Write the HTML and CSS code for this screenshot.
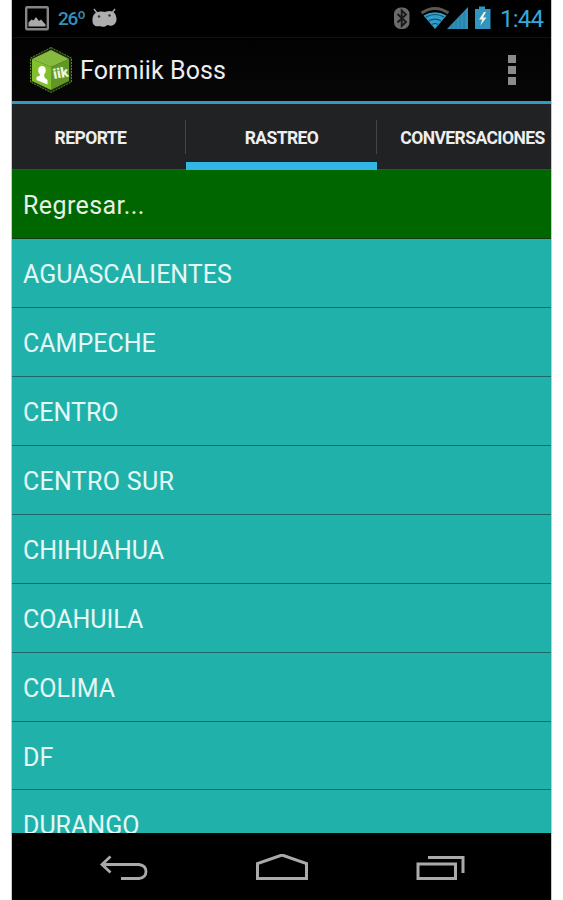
FILE: index.html
```html
<!DOCTYPE html>
<html lang="es">
<head>
<meta charset="utf-8">
<title>Formiik Boss</title>
<link rel="stylesheet" href="styles.css">
</head>
<body>
<div class="phone">
  <header class="status">
    <svg class="status-left" width="110" height="37" viewBox="0 0 110 37">
      <rect x="14.2" y="7.2" width="21.6" height="22" rx="1" fill="none" stroke="#858585" stroke-width="2.4"/>
      <path d="M16.500 26.500v-4l3-3 2 1 2.500-3.500 3 4 2-1.500 4.500 5v2z" fill="#aaa"/>
      <path d="M85 13l-3-4M100 13l3-4" fill="none" stroke="#aaa" stroke-width="1.400"/>
      <path d="M80.500 21c-.5-6 3-9.500 8-9.500 3 0 4 1 6 0 5-2 10 1 10 7.500 0 6-5 8-9 6-3 2.500-6 2-8 1-4 1-7-1-7-5z" fill="#aeaeae"/>
      <circle cx="87" cy="16.500" r="1.200" fill="#333"/><circle cx="97.500" cy="15.500" r="1.200" fill="#333"/>
    </svg>
    <span class="temp">26º</span>
    <svg class="status-right" width="106" height="37" viewBox="0 0 106 37">
      <rect x="9" y="7.500" width="15.500" height="21.500" rx="6.500" fill="#6b6b6b"/>
      <path d="M12.500 14l8.500 8-4.300 4V10.500L21 14.500l-8.500 8" fill="none" stroke="#191919" stroke-width="1.900"/>
      <path d="M36.500 13q13.500-9 27 0" fill="none" stroke="#5a5855" stroke-width="3"/>
      <path d="M38.500 15.500q11.500-6.500 23 0L50 29z" fill="#2f9ecb"/>
      <path d="M41 17q9-5 18 0M44 20.800q6-3.500 12 0M47 24.500q3-2 6 0" fill="none" stroke="#10506b" stroke-width="1.200"/>
      <path d="M62 29L83 7v22z" fill="#2f91b9"/>
      <path d="M67 24v5M71 20v9M75 16v13M79 12v17" stroke="#23799c" stroke-width="1"/>
      <path d="M90 9h4V6.500h6V9h5.500v20H90z" fill="#3195bf"/>
      <path d="M99 12l-5 7.500h3.300l-2 6 6.200-8h-3.500l3-5.500z" fill="#f5f5e8"/>
    </svg>
    <span class="clock">1:44</span>
  </header>

  <div class="appbar">
    <svg class="logo" width="44" height="48" viewBox="0 0 44 48">
      <path d="M22 1.500L42.500 12v24L22 46.500 1.500 36V12z" fill="#1c2b10" stroke="#5c8130" stroke-width="1" stroke-dasharray="2 1"/>
      <path d="M22 4L40 13 22 21 3 13z" fill="#86bb3d"/>
      <path d="M3 13l19 8v23L3 35z" fill="#83bf2c"/>
      <path d="M22 21l18-8v22L22 44z" fill="#619725"/>
      <ellipse cx="13" cy="24.500" rx="3.800" ry="4.500" fill="#fff"/>
      <path d="M11 27h4l.5 4.500 3 2.500v4.500L7.500 34v-3l3.500-1.500z" fill="#fff"/>
      <text class="logo-text" x="25" y="33" transform="rotate(-10 25 33)">iik</text>
    </svg>
    <h1 class="title">Formiik Boss</h1>
    <div class="overflow"><i></i><i></i><i></i></div>
  </div>

  <nav class="tabs">
    <div class="tab"><span>REPORTE</span></div>
    <div class="tab active"><span>RASTREO</span></div>
    <div class="tab"><span>CONVERSACIONES</span></div>
  </nav>

  <ul class="list">
    <li class="back">Regresar...</li>
    <li>AGUASCALIENTES</li>
    <li>CAMPECHE</li>
    <li>CENTRO</li>
    <li class="wide">CENTRO SUR</li>
    <li>CHIHUAHUA</li>
    <li>COAHUILA</li>
    <li>COLIMA</li>
    <li>DF</li>
    <li>DURANGO</li>
  </ul>

  <footer class="navbar">
    <svg width="50" height="30" viewBox="0 0 50 30"><path d="M11.500 2.500L3 10.500l8.500 8M3 10.500h37q7 1 7 7t-7 7H22" fill="none" stroke="#aaa" stroke-width="2.800"/></svg>
    <svg width="54" height="30" viewBox="0 0 54 30"><path d="M1.500 24.500V9.500L26 1l24.500 8.500v15z" fill="none" stroke="#aaa" stroke-width="3"/></svg>
    <svg width="50" height="30" viewBox="0 0 50 30"><path d="M2 10h37.500v14.500H2zM12 3.500h35V19" fill="none" stroke="#aaa" stroke-width="3"/></svg>
  </footer>
</div>
</body>
</html>
```
FILE: styles.css
```css
* { box-sizing: border-box; }
body {
  margin: 0;
  background: #fff;
  font-family: Roboto, "Liberation Sans", sans-serif;
}
.phone {
  display: flex;
  flex-direction: column;
  width: 539px;
  height: 900px;
  margin-left: 12px;
  background: #000;
  box-shadow: 0 0 0 1px #c8c8c8;
  overflow: hidden;
}
.status {
  display: flex;
  flex: none;
  height: 37px;
  line-height: 38px;
  color: #3191b8;
}
.status-left { flex: none; margin-right: -64px; }
.temp { flex: none; width: 30px; font-size: 19px; font-weight: 500; letter-spacing: -1.2px; }
.status-right { flex: none; margin-left: 297px; }
.clock { flex: none; margin-left: 9px; font-size: 24px; letter-spacing: -0.8px; color: #33aada; }
.appbar {
  display: flex;
  flex: none;
  align-items: center;
  height: 67px;
  padding: 0 35px 0 17px;
  background: linear-gradient(#020202, #070707);
  border-top: 1px solid #101010;
  border-bottom: 3px solid #3598c4;
}
.logo { flex: none; }
.logo-text { font: 900 14px Roboto, sans-serif; fill: #edf5df; }
.title {
  margin: 2px auto 0 7px;
  font-size: 25px;
  font-weight: 400;
  letter-spacing: 0.1px;
  color: #eee;
}
.overflow { display: grid; gap: 3px; margin-top: 1px; }
.overflow i { width: 8px; height: 8px; background: #8b8b8b; }
.tabs {
  display: flex;
  flex: none;
  justify-content: center;
  height: 66px;
  background: #212224;
  overflow: hidden;
}
.tab {
  display: flex;
  flex: none;
  align-items: center;
  justify-content: center;
  width: 191px;
  padding-top: 2px;
  border-bottom: 1px solid #44464a;
  font-size: 17.500px;
  font-weight: 700;
  letter-spacing: -0.57px;
  color: #eee;
  background: linear-gradient(#454648, #454648) right 16px / 1px 34px no-repeat;
}
.tab.active { border-bottom: 8px solid #33b5e5; padding-top: 9px; }
.tab:last-child { background: none; }
.tab span { white-space: nowrap; }
.list {
  flex: 1;
  min-height: 0;
  margin: 0;
  padding: 0;
  list-style: none;
  overflow: hidden;
}
.list li {
  height: 68.950px;
  padding: 1px 11px 0;
  border-bottom: 1.500px solid #1e6965;
  background: #20b2aa;
  color: #e6f8f6;
  font-size: 25px;
  line-height: 70px;
}
.list .back {
  background: #060;
  border-color: #173b12;
  color: #e6f0e6;
  letter-spacing: 0.4px;
}
.list .wide { letter-spacing: 0.3px; }
.navbar {
  display: flex;
  flex: none;
  justify-content: space-between;
  height: 67px;
  padding: 21px 85px 0 87px;
}
```
